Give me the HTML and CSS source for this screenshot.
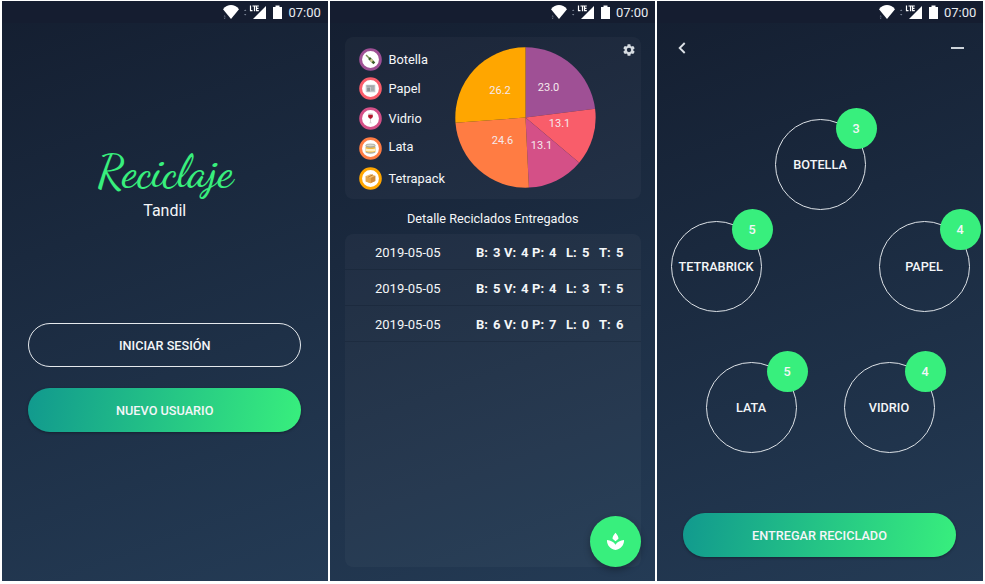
FILE: index.html
```
<!DOCTYPE html>
<html lang="es">
<head>
<meta charset="utf-8">
<title>Reciclaje Tandil</title>
<link rel="stylesheet" href="styles.css">
</head>
<body>
<svg class="defs" aria-hidden="true">
  <symbol id="status" viewBox="0 0 62 16">
    <path fill="#fff" d="M0 5.2C4.500-.3 11.500-.3 16 5.200L8 15Z"/>
    <path fill="#7d8797" d="M.7 12.500l1-1.300 1 1.300zM.7 13.800h2l-1 1.300zM21 7l1.200-1.600L23.400 7zM21 10h2.400l-1.200 1.600z"/>
    <path fill="#fff" d="M30 15L43 2v13z"/>
    <path fill="none" stroke="#fff" stroke-width="1.200" d="M27.500 1.500v5.200h2M29.500 2h4M31.500 2v5.200M35.800 2h-2.300v4.700h2.300M33.500 4.300h2"/>
    <path fill="#fff" d="M50 3h2.500V1.500h4V3H59v12h-9z"/>
  </symbol>
</svg>
<main class="screens">
  <section class="phone">
    <header class="status"><svg class="signal"><use href="#status"/></svg><time>07:00</time></header>
    <div class="welcome">
      <h1 class="brand">Reciclaje</h1>
      <p class="city">Tandil</p>
      <button class="btn outline">INICIAR SESIÓN</button>
      <button class="btn filled">NUEVO USUARIO</button>
    </div>
  </section>

  <section class="phone">
    <header class="status"><svg class="signal"><use href="#status"/></svg><time>07:00</time></header>
    <div class="summary">
      <div class="card stats">
        <ul class="legend">
          <li><svg viewBox="0 0 24 24"><circle cx="12" cy="12" r="10.300" fill="#fff" stroke="#9f5095" stroke-width="3"/><path d="M7.300 7.300l3.500 3.500" stroke="#7d9158" stroke-width="1.500"/><path d="M10.500 10.500l5.500 5.500" stroke="#3b5b29" stroke-width="2.800"/><path d="M12 12l2 2" stroke="#d6ce91" stroke-width="2.200"/></svg>Botella</li>
          <li><svg viewBox="0 0 24 24"><circle cx="12" cy="12" r="10.300" fill="#fff" stroke="#f95d6a" stroke-width="3"/><path fill="#c3c7ca" d="M7 8h10v8H8l-1-1z"/><path stroke="#8b9094" d="M8 9.500h8M12.500 11.500H16M12.500 13.500H16"/><path fill="#8b9094" d="M8.500 11h3v4h-3z"/></svg>Papel</li>
          <li><svg viewBox="0 0 24 24"><circle cx="12" cy="12" r="10.300" fill="#fff" stroke="#d45087" stroke-width="3"/><path fill="#d9cfd2" d="M9.800 6.500h4.400l.5 4-2.200 2v3.500l1.500 1h-4l1.500-1v-3.500l-2.200-2z"/><path fill="#b5182c" d="M9.700 8.200h4.600l.1 2.300-1.900 1.700h-1l-1.900-1.700z"/></svg>Vidrio</li>
          <li class="can"><svg viewBox="0 0 24 24"><circle cx="12" cy="12" r="10.300" fill="#fff" stroke="#ff7c43" stroke-width="3"/><path fill="#aeb2ad" d="M7 8.500h10v8q-5 2-10 0z"/><path fill="#f2b63d" d="M7 10.500q5 1.500 10 0v5q-5 1.500-10 0z"/><path fill="#fff0c4" d="M7 12q5 1.200 10 0v2.500q-5 1.200-10 0z"/><ellipse cx="12" cy="8.800" rx="5" ry="1.500" fill="#d7d7cc" stroke="#8c8b7d" stroke-width=".6"/></svg><span>Lata</span></li>
          <li><svg viewBox="0 0 24 24"><circle cx="12" cy="12" r="10.300" fill="#fff" stroke="#ffa600" stroke-width="3"/><path fill="#f0bd6b" d="M7 9.500l5.500-2.300L17 9v5.500l-5 2.500-5-2z"/><path fill="#d08a38" d="M12 11.500L17 9v5.500L12 17z"/><path fill="#e5a548" d="M7 9.500l5 2V17l-5-2z"/><path d="M9.500 10.500l5-2.300" stroke="#b87830"/></svg>Tetrapack</li>
        </ul>
        <svg class="pie" viewBox="0 0 141 141">
          <path fill="#9f5095" d="M70.500 70.500V.3A70.200 70.200 0 0 1 140.100 61.700Z"/>
          <path fill="#f95d6a" d="M70.500 70.500L140.100 61.700A70.200 70.200 0 0 1 124.200 115.700Z"/>
          <path fill="#d45087" d="M70.500 70.500L124.200 115.700A70.200 70.200 0 0 1 73.900 140.600Z"/>
          <path fill="#ff7c43" d="M70.500 70.500L73.900 140.600A70.200 70.200 0 0 1 .5 75.700Z"/>
          <path fill="#ffa600" d="M70.500 70.500L.5 75.700A70.200 70.200 0 0 1 70.500.3Z"/>
          <g class="values"><text x="93.500" y="43.500">23.0</text><text x="104.500" y="79.800">13.1</text><text x="86.500" y="101.500">13.1</text><text x="47.500" y="96.500">24.6</text><text x="45" y="46.500">26.2</text></g>
        </svg>
        <svg class="gear" viewBox="2 2 20 20"><path fill="#d6dbe1" fill-rule="evenodd" d="M19.140 12.940c.04-.3.06-.61.06-.94s-.02-.64-.07-.94l2.030-1.580c.18-.14.23-.41.12-.61l-1.920-3.320c-.12-.22-.37-.29-.59-.22l-2.390.96c-.5-.38-1.030-.7-1.620-.94l-.36-2.540A.48.480 0 0 0 13.920 2.400h-3.840c-.24 0-.43.17-.47.41l-.36 2.540c-.59.240-1.130.570-1.620.940l-2.390-.96c-.22-.08-.47 0-.59.220L2.740 8.870c-.12.210-.08.470.12.610l2.030 1.580c-.05.300-.09.630-.09.940s.02.640.07.940l-2.030 1.580c-.18.140-.23.410-.12.610l1.920 3.320c.12.220.37.290.59.220l2.390-.96c.5.380 1.030.700 1.620.940l.36 2.540c.05.240.24.410.48.410h3.840c.24 0 .44-.17.47-.41l.36-2.540c.59-.24 1.130-.56 1.620-.94l2.390.96c.22.080.47 0 .59-.22l1.920-3.320c.12-.22.070-.47-.12-.61zM12 15.600a3.600 3.600 0 1 1 0-7.200 3.600 3.600 0 0 1 0 7.200z"/></svg>
      </div>
      <h2 class="heading">Detalle Reciclados Entregados</h2>
      <div class="card details">
        <div class="row"><time>2019-05-05</time><b>B:</b><b>3</b><b>V:</b><b>4</b><b>P:</b><b>4</b><b>L:</b><b>5</b><b>T:</b><b>5</b></div>
        <div class="row"><time>2019-05-05</time><b>B:</b><b>5</b><b>V:</b><b>4</b><b>P:</b><b>4</b><b>L:</b><b>3</b><b>T:</b><b>5</b></div>
        <div class="row"><time>2019-05-05</time><b>B:</b><b>6</b><b>V:</b><b>0</b><b>P:</b><b>7</b><b>L:</b><b>0</b><b>T:</b><b>6</b></div>
      </div>
      <button class="fab" aria-label="Reciclar"><svg viewBox="0 0 20 20"><path fill="#fff" d="M10 .8C7.800 3.200 6.700 5.500 6.900 7.200L10 9.800l3.100-2.600C13.300 5.500 12.200 3.200 10 .8zM1 8.500c4 .3 7.200 2 9 5 1.800-3 5-4.700 9-5 .1 5.500-3.300 9.300-9 10.500C4.300 17.800.9 14 1 8.500z"/></svg></button>
    </div>
  </section>

  <section class="phone">
    <header class="status"><svg class="signal"><use href="#status"/></svg><time>07:00</time></header>
    <nav class="toolbar"><svg viewBox="0 0 8 12"><path d="M6.700 1L1.700 6l5 5" fill="none" stroke="#dce1e7" stroke-width="1.900"/></svg><i></i></nav>
    <div class="deliver">
      <div class="line one"><div class="bubble">BOTELLA<span class="badge">3</span></div></div>
      <div class="line two"><div class="bubble">TETRABRICK<span class="badge">5</span></div><div class="bubble">PAPEL<span class="badge">4</span></div></div>
      <div class="line three"><div class="bubble">LATA<span class="badge">5</span></div><div class="bubble">VIDRIO<span class="badge">4</span></div></div>
      <button class="btn filled">ENTREGAR RECICLADO</button>
    </div>
  </section>
</main>
</body>
</html>
```
FILE: styles.css
```
* { box-sizing: border-box; }
body { margin: 0; background: #fff; color: #f4f6f8; font-family: Roboto, sans-serif; }
h1, h2, p, ul { margin: 0; padding: 0; font-weight: 400; }
ul { list-style: none; }
button { border: 0; padding: 0; font-family: inherit; color: inherit; }
.defs { position: absolute; width: 0; height: 0; }
.screens { display: grid; grid-template-columns: 325.500px 325.500px 326px; gap: 2px; padding: 1px 0 0 2px; height: 584px; }
.phone { height: 580px; display: flex; flex-direction: column; background: linear-gradient(160deg, #141e30 0%, #243b55 100%); }
.phone:nth-child(2) { margin-left: .5px; }
.status { height: 22px; flex: none; display: flex; justify-content: flex-end; align-items: center; padding-right: 7px; background: #151d30; font-size: 13px; line-height: 22px; }
.signal { width: 62px; height: 16px; margin-right: 3.500px; }
.status time { color: #e9ecf0; width: 32px; padding-top: 1px; white-space: nowrap; }

.welcome { display: flex; flex-direction: column; align-items: center; padding: 122px 26px 0; }
.brand { height: 55px; padding-left: 1px; font: 500 45px/55px "Dancing Script", "Liberation Serif", cursive; color: #38ef7d; }
.city { font-size: 16px; line-height: 22px; margin-bottom: 101px; }
.btn { width: 273px; height: 44px; border-radius: 22px; font-size: 12.700px; font-weight: 500; line-height: 45px; text-align: center; }
.outline { background: transparent; border: 1px solid #e5e9ed; line-height: 43px; }
.filled { background: linear-gradient(100deg, #11998e, #38ef7d); box-shadow: 0 1px 3px rgba(0,0,0,.35); }
.welcome .filled { margin-top: 21px; }

.summary { position: relative; flex: 1; padding: 14px 14px 14px 14.500px; display: flex; flex-direction: column; }
.card { border-radius: 8px; background: rgba(255,255,255,.033); }
.stats { position: relative; height: 162px; display: flex; padding-top: 10px; }
.legend { width: 110.500px; padding-left: 14px; }
.legend li { height: 30px; display: flex; align-items: center; gap: 7px; font-size: 12.800px; }
.legend li:first-child { height: 24px; margin-bottom: 2px; }
.legend svg { width: 23px; height: 23px; flex: none; }
.can span { position: relative; top: -2px; }
.pie { width: 141px; height: 141px; margin-top: .2px; }
.values { font-size: 11px; fill: #f5e9ed; text-anchor: middle; }
.gear { position: absolute; right: 6.500px; top: 7px; width: 12px; height: 12px; }
.heading { height: 35px; font-size: 12.700px; line-height: 40px; text-align: center; }
.details { flex: 1; overflow: hidden; }
.row { height: 36px; border-bottom: 1px solid rgba(12,22,38,.25); display: grid; grid-template-columns: 101px 17px 11px 17px 11px 17px 17px 16px 17px 17px 10px; align-items: center; padding: 1px 0 0 30.500px; font-size: 13px; white-space: nowrap; }
.fab { position: absolute; right: 14px; bottom: 14px; width: 51px; height: 51px; border-radius: 50%; background: #38ef7d; box-shadow: 0 3px 7px rgba(0,0,0,.3); display: grid; place-items: center; }
.fab svg { width: 19px; height: 19px; }

.toolbar { height: 49px; display: flex; justify-content: space-between; align-items: center; padding: 0 19px 0 21px; }
.toolbar svg { width: 8px; height: 12px; }
.toolbar i { width: 13px; height: 2px; background: #cdd3da; }
.deliver { display: flex; flex-direction: column; align-items: center; padding: 47px 0 0; }
.line { display: flex; height: 91px; }
.bubble { position: relative; width: 91px; height: 91px; border: 1px solid #dde2e7; border-radius: 50%; display: grid; place-items: center; font-size: 12.700px; font-weight: 500; }
.badge { position: absolute; left: 60px; top: -12.500px; width: 41px; height: 41px; border-radius: 50%; background: #38ef7d; text-align: center; line-height: 42px; }
.two { gap: 117px; margin-top: 10.500px; }
.three { gap: 47px; margin-top: 50.500px; }
.deliver .filled { margin: 60px 1px 0 0; }
```
